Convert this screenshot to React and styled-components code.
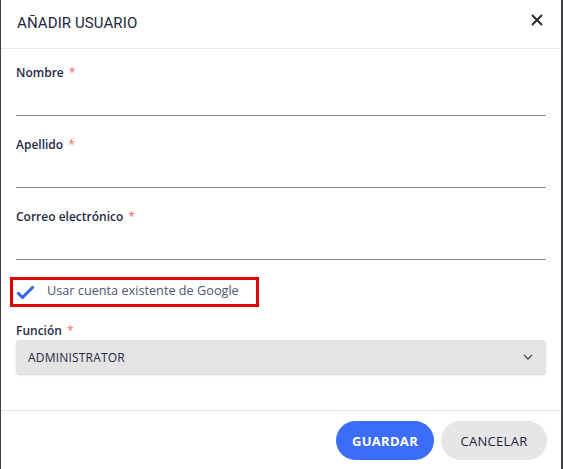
import React from "react";
import styled, { createGlobalStyle } from "styled-components";

const GlobalStyle = createGlobalStyle`
  html, body {
    margin: 0;
    padding: 0;
    background: #3d3f45;
  }
  * {
    box-sizing: border-box;
  }
`;

const Dialog = styled.div`
  width: 560px;
  height: 469px;
  margin-left: 1px;
  background: #ffffff;
  display: flex;
  flex-direction: column;
  font-family: "Open Sans", "Noto Sans", sans-serif;
  color: #1f2a44;
`;

const Header = styled.div`
  height: 49px;
  flex-shrink: 0;
  display: flex;
  align-items: center;
  justify-content: space-between;
  padding: 0 16px 2px 16px;
  border-bottom: 1px solid #e8e8eb;
`;

const Title = styled.h2`
  margin: 0;
  font-family: "Roboto", "Inter", sans-serif;
  font-size: 15px;
  font-weight: 400;
  letter-spacing: 0.1px;
  color: #1c2740;
`;

const CloseButton = styled.button`
  border: none;
  background: none;
  padding: 0;
  width: 16px;
  height: 16px;
  margin-top: -6px;
  cursor: pointer;
  display: flex;
  align-items: center;
  justify-content: center;
`;

const Body = styled.div`
  flex: 1;
  padding: 17px 15px 0 15px;
`;

const Field = styled.div`
  margin-bottom: 22px;
`;

const Label = styled.label`
  display: block;
  font-size: 12px;
  line-height: 14px;
  font-weight: 600;
  color: #1f2a44;
`;

const Required = styled.span`
  color: #f0686b;
  margin-left: 5px;
  font-weight: 400;
`;

const TextInput = styled.input`
  display: block;
  width: 100%;
  height: 36px;
  border: none;
  border-bottom: 1px solid #8a8a8a;
  outline: none;
  background: transparent;
  font-family: inherit;
  font-size: 13px;
`;

const CheckRow = styled.div`
  margin: -5px 0 0 -6px;
  width: 249px;
  height: 30px;
  border: 3px solid #e20000;
  display: flex;
  align-items: center;
  gap: 12px;
  padding-left: 3px;
`;

const CheckText = styled.span`
  font-size: 12.7px;
  color: #4c5470;
  margin-top: -4px;
`;

const SelectLabel = styled(Label)`
  margin-top: 17px;
`;

const Select = styled.div`
  margin-top: 2px;
  height: 34px;
  border-radius: 4px;
  background: #e4e4e4;
  box-shadow: 0 1px 2px rgba(0, 0, 0, 0.18);
  display: flex;
  align-items: center;
  justify-content: space-between;
  padding: 0 13px 0 12px;
  font-size: 12px;
  font-weight: 500;
  color: #1f2a44;
  letter-spacing: 0.2px;
`;

const Footer = styled.div`
  flex-shrink: 0;
  border-top: 1px solid #e4e4e6;
  padding: 10px 14px 9px 16px;
  display: flex;
  justify-content: flex-end;
  gap: 7px;
`;

const Button = styled.button`
  height: 39px;
  border: none;
  border-radius: 20px;
  padding: 0 ${({ $primary }) => ($primary ? "15px" : "16px")};
  min-width: ${({ $primary }) => ($primary ? "98px" : "106px")};
  background: ${({ $primary }) => ($primary ? "#3b6df8" : "#e6e6e6")};
  color: ${({ $primary }) => ($primary ? "#ffffff" : "#1a2440")};
  font-family: "Open Sans", "Noto Sans", sans-serif;
  font-size: 13px;
  font-weight: ${({ $primary }) => ($primary ? 700 : 500)};
  letter-spacing: 0.3px;
  cursor: pointer;
`;

const fields = ["Nombre", "Apellido", "Correo electrónico"];

export default function App() {
  return (
    <>
      <GlobalStyle />
      <Dialog>
        <Header>
          <Title>AÑADIR USUARIO</Title>
          <CloseButton>
            <svg width="12" height="12" viewBox="0 0 12 12">
              <path
                d="M1 1 L11 11 M11 1 L1 11"
                stroke="#2b2b2b"
                strokeWidth="2"
                fill="none"
              />
            </svg>
          </CloseButton>
        </Header>
        <Body>
          {fields.map((f) => (
            <Field key={f}>
              <Label>
                {f}
                <Required>*</Required>
              </Label>
              <TextInput />
            </Field>
          ))}
          <CheckRow>
            <svg width="19" height="15" viewBox="0 0 19 15">
              <path
                d="M1.5 7.5 L6.5 12.5 L17.5 1.5"
                stroke="#3366ee"
                strokeWidth="3"
                fill="none"
              />
            </svg>
            <CheckText>Usar cuenta existente de Google</CheckText>
          </CheckRow>
          <SelectLabel>
            Función
            <Required>*</Required>
          </SelectLabel>
          <Select>
            <span>ADMINISTRATOR</span>
            <svg width="10" height="6" viewBox="0 0 10 6">
              <path
                d="M1 1 L5 5 L9 1"
                stroke="#4a5068"
                strokeWidth="1.4"
                fill="none"
              />
            </svg>
          </Select>
        </Body>
        <Footer>
          <Button $primary>GUARDAR</Button>
          <Button>CANCELAR</Button>
        </Footer>
      </Dialog>
    </>
  );
}
